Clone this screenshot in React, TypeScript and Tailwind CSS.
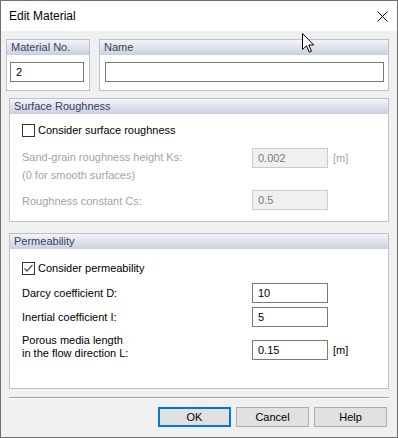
import React from "react";

const font = { fontFamily: '"Liberation Sans", Arial, sans-serif' };

function Group({ title, className, children }: { title: string; className: string; children?: React.ReactNode }) {
  return (
    <div className={`border border-[#b9c1d3] bg-white flex flex-col ${className}`}>
      <div className="h-[15px] shrink-0 bg-gradient-to-b from-[#f4f5f9] to-[#c9cfdf] text-[11px] leading-[15px] text-[#3a405e] pl-[4px]">
        {title}
      </div>
      {children}
    </div>
  );
}

function Input({ value, disabled, className }: { value: string; disabled?: boolean; className: string }) {
  return (
    <div
      className={`h-[20px] border flex items-center pl-[5px] text-[11px] ${
        disabled ? "border-[#cccccc] bg-[#f0f0f0] text-[#7a7a7a]" : "border-[#7a7a7a] bg-white text-black"
      } ${className}`}
    >
      {value}
    </div>
  );
}

function Checkbox({ checked }: { checked?: boolean }) {
  return (
    <div className="w-[13px] h-[13px] border border-[#333333] bg-white flex items-center justify-center shrink-0">
      {checked && (
        <svg width="11" height="11" viewBox="0 0 11 11">
          <polyline points="1.5,5.5 4,8 9.5,2" fill="none" stroke="#555555" strokeWidth="1.3" />
        </svg>
      )}
    </div>
  );
}

export default function App() {
  return (
    <div style={font} className="w-[398px] h-[438px] border border-[#6e6e6e] bg-[#f0f0f0] flex flex-col relative overflow-hidden text-black">
      {/* title bar */}
      <div className="h-[30px] bg-white flex items-center justify-between shrink-0">
        <span className="pl-[8px] text-[12px]">Edit Material</span>
        <svg width="11" height="11" viewBox="0 0 11 11" className="mr-[9px]">
          <path d="M0.5 0.5 L10.5 10.5 M10.5 0.5 L0.5 10.5" stroke="#000" strokeWidth="1" />
        </svg>
      </div>

      {/* top row */}
      <div className="flex mt-[8px] ml-[5px]">
        <Group title="Material No." className="w-[84px] h-[52px]">
          <div className="pl-[3px] pt-[7px]">
            <Input value="2" className="w-[74px]" />
          </div>
        </Group>
        <Group title="Name" className="w-[290px] h-[52px] ml-[9px]">
          <div className="pl-[5px] pt-[7px]">
            <Input value="" className="w-[279px]" />
          </div>
        </Group>
      </div>

      {/* surface roughness */}
      <Group title="Surface Roughness" className="mt-[7px] ml-[8px] w-[380px] h-[124px]">
        <div className="pl-[12px] flex flex-col text-[11px]">
          <div className="flex items-center h-[14px] mt-[9px]">
            <Checkbox />
            <span className="ml-[3px]">Consider surface roughness</span>
          </div>
          <div className="flex mt-[11px]">
            <div className="w-[230px] leading-[18px] text-[#a3a3a3]">
              <div>Sand-grain roughness height Ks:</div>
              <div>(0 for smooth surfaces)</div>
            </div>
            <Input value="0.002" disabled className="w-[76px]" />
            <span className="ml-[5px] h-[20px] leading-[20px] text-[#a3a3a3]">[m]</span>
          </div>
          <div className="flex mt-[6px] items-center">
            <div className="w-[230px] text-[#a3a3a3] pt-[2px]">Roughness constant Cs:</div>
            <Input value="0.5" disabled className="w-[76px]" />
          </div>
        </div>
      </Group>

      {/* permeability */}
      <Group title="Permeability" className="mt-[11px] ml-[8px] w-[380px] h-[156px]">
        <div className="pl-[12px] flex flex-col text-[11px]">
          <div className="flex items-center h-[14px] mt-[12px]">
            <Checkbox checked />
            <span className="ml-[3px]">Consider permeability</span>
          </div>
          <div className="flex mt-[8px] items-center">
            <div className="w-[230px]">Darcy coefficient D:</div>
            <Input value="10" className="w-[76px]" />
          </div>
          <div className="flex mt-[4px] items-center">
            <div className="w-[230px]">Inertial coefficient I:</div>
            <Input value="5" className="w-[76px]" />
          </div>
          <div className="flex mt-[7px] items-end">
            <div className="w-[230px] leading-[13px]">
              <div>Porous media length</div>
              <div>in the flow direction L:</div>
            </div>
            <Input value="0.15" className="w-[76px]" />
            <span className="ml-[5px] h-[20px] leading-[20px]">[m]</span>
          </div>
        </div>
      </Group>

      {/* separator */}
      <div className="mt-[8px] ml-[8px] w-[380px] h-[2px] border-t border-[#a0a0a0] bg-white" />

      {/* buttons */}
      <div className="flex mt-[8px] ml-[157px] gap-[5px] text-[11px]">
        <button className="w-[73px] h-[20px] border-2 border-[#0078d7] bg-[#e1e1e1] flex items-center justify-center">OK</button>
        <button className="w-[73px] h-[20px] border border-[#adadad] bg-[#e1e1e1] flex items-center justify-center">Cancel</button>
        <button className="w-[73px] h-[20px] border border-[#adadad] bg-[#e1e1e1] flex items-center justify-center">Help</button>
      </div>

      {/* mouse cursor */}
      <svg width="13" height="21" viewBox="0 0 13 21" className="absolute left-[301px] top-[32px]">
        <path d="M0.5 0.5 L0.5 16.5 L4.5 12.8 L7.2 19.2 L9.4 18.2 L6.8 12 L11.8 12 Z" fill="#fff" stroke="#000" strokeWidth="1" strokeLinejoin="miter" />
      </svg>
    </div>
  );
}
